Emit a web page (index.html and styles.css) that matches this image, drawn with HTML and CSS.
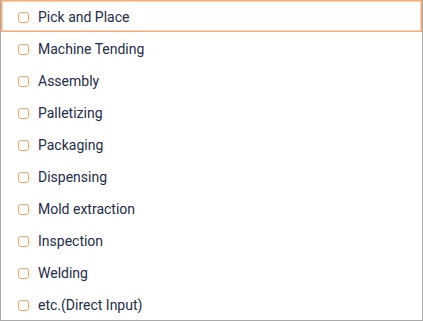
FILE: index.html
```html
<!DOCTYPE html>
<html>
<head>
	<title>Application</title>
	<meta name="viewport" content="width=device-width,initial-scale=1.0">
	<link rel="stylesheet" href="styles.css">
</head>
<body>
<div class="wrapper">
	<ul class="option_list">
		<li class="option active"><span class="check"></span>Pick and Place</li>
		<li class="option"><span class="check"></span>Machine Tending</li>
		<li class="option"><span class="check"></span>Assembly</li>
		<li class="option"><span class="check"></span>Palletizing</li>
		<li class="option"><span class="check"></span>Packaging</li>
		<li class="option"><span class="check"></span>Dispensing</li>
		<li class="option"><span class="check"></span>Mold extraction</li>
		<li class="option"><span class="check"></span>Inspection</li>
		<li class="option"><span class="check"></span>Welding</li>
		<li class="option"><span class="check"></span>etc.(Direct Input)</li>
	</ul>
</div>
</body>
</html>
```

FILE: styles.css
```css
*{margin: 0;padding: 0;box-sizing: border-box;font-family: Roboto, sans-serif;}
body{background: #fff;}
.wrapper{width: 423px;height: 321px;border: 1px solid #a9a9a9;border-top: none;background: #fff;}
.option_list{list-style: none;}
.option{height: 32px;display: flex;align-items: center;padding: 2px 0 0 16px;font-size: 14px;color: #232c48;border: 1px solid transparent;}
.option.active{border: 1px solid #f7ac74;box-shadow: inset 0 0 0 1px #fbd3b4;}
.check{width: 11px;height: 11px;border: 1.6px solid #f7a05c;border-radius: 3px;margin-right: 9px;flex-shrink: 0;}
```
